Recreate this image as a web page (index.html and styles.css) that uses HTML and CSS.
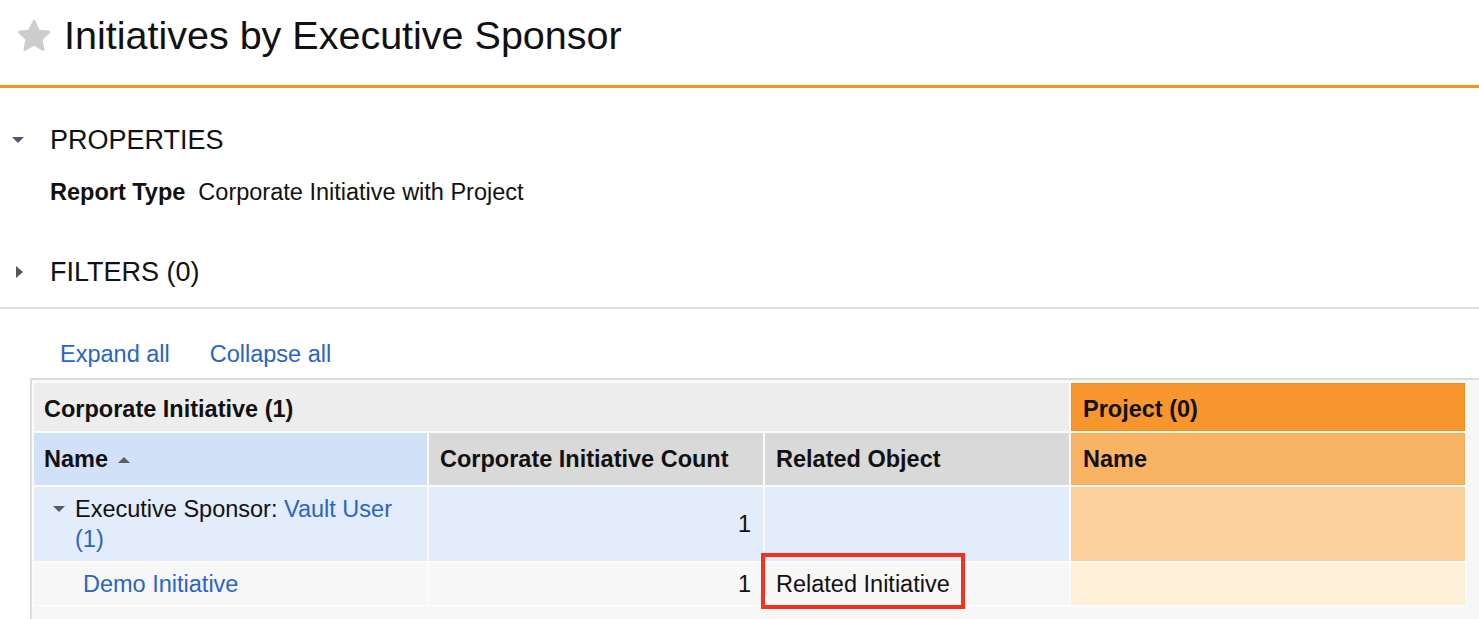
FILE: index.html
```html
<!DOCTYPE html>
<html lang="en">
<head>
<meta charset="utf-8">
<title>Initiatives by Executive Sponsor</title>
<link rel="stylesheet" href="styles.css">
</head>
<body>
<header class="page-header">
  <svg class="star" viewBox="0 0 24 24" aria-hidden="true">
    <path d="M12 2.6l2.85 6.05 6.55.85-4.8 4.55 1.25 6.55L12 17.35 6.15 20.6l1.25-6.55-4.8-4.55 6.55-.85z" fill="#cdcdcd" stroke="#cdcdcd" stroke-width="1.6" stroke-linejoin="round"/>
  </svg>
  <h1 class="title">Initiatives by Executive Sponsor</h1>
</header>

<section class="section properties">
  <div class="section-head"><span class="caret caret-down"></span><h2 class="section-title">PROPERTIES</h2></div>
  <div class="prop"><span class="prop-label">Report Type</span><span class="prop-value">Corporate Initiative with Project</span></div>
</section>

<section class="section filters">
  <div class="section-head"><span class="caret caret-right"></span><h2 class="section-title">FILTERS (0)</h2></div>
</section>

<div class="report-area">
  <div class="toolbar">
    <a class="link" href="#">Expand all</a>
    <a class="link" href="#">Collapse all</a>
  </div>
  <div class="report">
    <table class="grid">
      <colgroup>
        <col class="c-name">
        <col class="c-count">
        <col class="c-rel">
        <col class="c-proj">
      </colgroup>
      <tr class="group-row">
        <th colspan="3" class="group-ci">Corporate Initiative (1)</th>
        <th class="group-proj">Project (0)</th>
      </tr>
      <tr class="head-row">
        <th class="h-name">Name<span class="sort-up"></span></th>
        <th class="h-gray">Corporate Initiative Count</th>
        <th class="h-gray">Related Object</th>
        <th class="h-proj">Name</th>
      </tr>
      <tr class="row-group">
        <td class="name-cell">
          <div class="tree">
            <span class="caret caret-down small"></span>
            <span class="tree-text">Executive Sponsor: <a class="link" href="#">Vault User (1)</a></span>
          </div>
        </td>
        <td class="num">1</td>
        <td></td>
        <td class="proj-1"></td>
      </tr>
      <tr class="row-detail">
        <td class="detail-name"><a class="link" href="#">Demo Initiative</a></td>
        <td class="num">1</td>
        <td class="rel-cell">Related Initiative<div class="highlight"></div></td>
        <td class="proj-2"></td>
      </tr>
    </table>
  </div>
</div>
</body>
</html>
```

FILE: styles.css
```css
* { box-sizing: border-box; }

html, body { overflow: hidden; }

body {
  margin: 0;
  font-family: "Liberation Sans", Arial, sans-serif;
  color: #111;
  background: #fff;
  font-size: 23.5px;
}

.page-header {
  display: flex;
  align-items: center;
  gap: 11px;
  height: 88px;
  padding: 0 0 13px 15px;
  border-bottom: 3px solid #f7931e;
}

.star {
  width: 38px;
  height: 38px;
  flex: none;
}

.title {
  margin: 0;
  font-size: 39.5px;
  font-weight: normal;
  line-height: 1;
  color: #111;
}

.section-head {
  display: flex;
  align-items: center;
  height: 32px;
  padding-left: 12px;
}

.caret {
  display: inline-block;
  width: 0;
  height: 0;
  flex: none;
}

.caret-down {
  border-left: 6px solid transparent;
  border-right: 6px solid transparent;
  border-top: 6px solid #4f5965;
  margin-right: 26px;
}

.caret-right {
  border-top: 6px solid transparent;
  border-bottom: 6px solid transparent;
  border-left: 7px solid #4f5965;
  margin-left: 4px;
  margin-right: 27px;
}

.section-title {
  margin: 0;
  font-size: 27px;
  font-weight: normal;
  line-height: 32px;
}

.properties { margin-top: 36px; }

.prop {
  margin-top: 21px;
  padding-left: 50px;
  line-height: 30px;
}

.prop-label {
  font-weight: bold;
  margin-right: 13px;
}

.filters {
  margin-top: 49px;
  padding-bottom: 19px;
  border-bottom: 2px solid #e0e0e0;
}

.report-area { padding-top: 30px; }

.toolbar {
  display: flex;
  gap: 40px;
  padding-left: 60px;
  line-height: 30px;
}

.link {
  color: #2a64c8;
  text-decoration: none;
}

.report {
  margin: 9px 0 0 30px;
  border-top: 2px solid #dcdcdc;
  border-left: 2px solid #dcdcdc;
  background: #f7f7f7;
  padding-top: 1px;
  height: 241px;
  overflow: hidden;
}

.grid {
  table-layout: fixed;
  width: 1435px;
  border-collapse: separate;
  border-spacing: 2px;
  background: #fbfbfb;
}

.c-name { width: 393px; }
.c-count { width: 334px; }
.c-rel { width: 304px; }
.c-proj { width: 394px; }

.grid th, .grid td {
  padding: 0 11px;
  text-align: left;
  vertical-align: middle;
  line-height: 30px;
}

.grid th { font-weight: bold; }

.group-row th { height: 48px; padding-top: 4px; }

.group-ci { background: #ededed; padding-left: 10px !important; }

.group-proj {
  background: #f7962c;
  border: 1px solid #f68c17;
}

.head-row th { height: 52px; }

.h-name { background: #d1e1f7; padding-left: 10px !important; }
.h-gray { background: #d9d9d9; }
.h-proj { background: #f9b364; border: 1px solid #f9ab52; }

.sort-up {
  display: inline-block;
  margin-left: 10px;
  vertical-align: 4px;
  border-left: 6.5px solid transparent;
  border-right: 6.5px solid transparent;
  border-bottom: 6px solid #5a5f66;
}

.row-group td {
  height: 74px;
  background: #e2ecfa;
}

.row-group .proj-1 { background: #fcd19b; }

.name-cell { padding-left: 19px !important; }

.tree {
  display: flex;
  align-items: flex-start;
}

.caret.small {
  margin-top: 12px;
  margin-right: 10px;
  border-left-width: 6.5px;
  border-right-width: 6.5px;
  border-top-color: #555c64;
}

.row-detail td {
  height: 42px;
  background: #f7f7f7;
}

.row-detail .proj-2 { background: #feefd8; }

.detail-name { padding-left: 49px !important; }

.num {
  text-align: right !important;
  padding-right: 12px !important;
}

.rel-cell { position: relative; }

.highlight {
  position: absolute;
  left: -4px;
  top: -10px;
  width: 204px;
  height: 56px;
  border: 4px solid #f5301e;
}
```
